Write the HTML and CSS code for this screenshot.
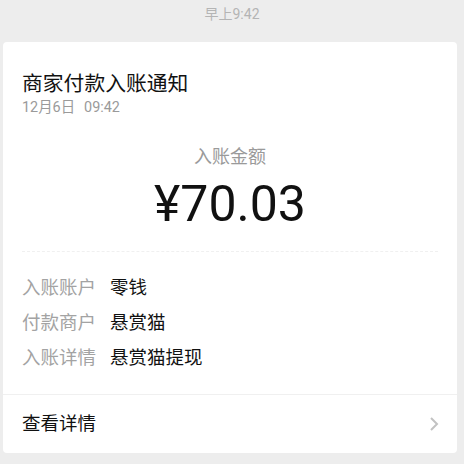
FILE: index.html
```html
<!DOCTYPE html>
<html lang="zh-CN">
<head>
<meta charset="utf-8">
<title>商家付款入账通知</title>
<link rel="stylesheet" href="styles.css">
</head>
<body>
<div class="time">早上9:42</div>
<div class="card">
  <div class="head">
    <div class="title">商家付款入账通知</div>
    <div class="date">12月6日<span class="clock">09:42</span></div>
  </div>
  <div class="amount-block">
    <div class="amount-label">入账金额</div>
    <div class="amount">¥70.03</div>
  </div>
  <div class="sep"></div>
  <div class="rows">
    <div class="row"><span class="label">入账账户</span><span class="value">零钱</span></div>
    <div class="row"><span class="label">付款商户</span><span class="value">悬赏猫</span></div>
    <div class="row"><span class="label">入账详情</span><span class="value">悬赏猫提现</span></div>
  </div>
  <div class="footer">
    <span class="more">查看详情</span>
    <svg class="chev" width="10" height="16" viewBox="0 0 10 16"><polyline points="2,2 8,8 2,14" fill="none" stroke="#c2c2c2" stroke-width="2"/></svg>
  </div>
</div>
</body>
</html>
```
FILE: styles.css
```css
html, body {
  margin: 0;
  padding: 0;
  background: #ededed;
  font-family: Roboto, "Noto Sans CJK SC", sans-serif;
  color: #1a1a1a;
}
.time {
  height: 42px;
  line-height: 28px;
  text-align: center;
  font-size: 14px;
  color: #b4b4b4;
}
.card {
  margin: 0 7px 0 3px;
  background: #fff;
  border-radius: 4px;
  height: 411px;
  display: flex;
  flex-direction: column;
}
.head {
  padding: 29px 19px 0;
}
.title {
  font-size: 20.8px;
  line-height: 26px;
  color: #111;
}
.date {
  font-size: 14.4px;
  line-height: 20px;
  margin-top: 1px;
  color: #9a9a9a;
}
.clock {
  margin-left: 9px;
}
.amount-block {
  text-align: center;
  margin-top: 27px;
}
.amount-label {
  font-size: 18px;
  line-height: 24px;
  color: #9a9a9a;
}
.amount {
  margin-top: 5px;
  font-size: 50px;
  line-height: 60px;
  color: #111;
}
.sep {
  margin: 17px 19px 0;
  border-top: 1px dashed #f0f0f0;
}
.rows {
  padding: 19px 19px 0;
}
.row {
  font-size: 18.5px;
  line-height: 35px;
  display: flex;
}
.label {
  width: 88px;
  color: #a3a3a3;
}
.value {
  color: #111;
}
.footer {
  margin-top: auto;
  height: 58px;
  border-top: 1px solid #f0f0f0;
  display: flex;
  align-items: center;
  justify-content: space-between;
  padding: 0 18px 0 19px;
}
.more {
  font-size: 18.5px;
  color: #111;
  line-height: 26px;
}
.chev {
  display: block;
}
```
